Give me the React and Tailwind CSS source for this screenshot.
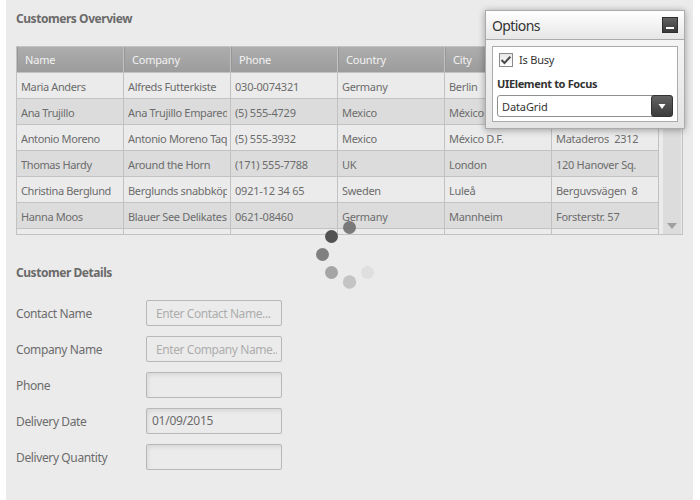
const columns = ["Name", "Company", "Phone", "Country", "City", "Address"];

const customers = [
  ["Maria Anders", "Alfreds Futterkiste", "030-0074321", "Germany", "Berlin", "Obere Str. 57"],
  ["Ana Trujillo", "Ana Trujillo Emparedados", "(5) 555-4729", "Mexico", "México D.F.", "Avda. 2222"],
  ["Antonio Moreno", "Antonio Moreno Taquería", "(5) 555-3932", "Mexico", "México D.F.", "Mataderos\u00a0 2312"],
  ["Thomas Hardy", "Around the Horn", "(171) 555-7788", "UK", "London", "120 Hanover Sq."],
  ["Christina Berglund", "Berglunds snabbköp", "0921-12 34 65", "Sweden", "Luleå", "Berguvsvägen\u00a0 8"],
  ["Hanna Moos", "Blauer See Delikatessen", "0621-08460", "Germany", "Mannheim", "Forsterstr. 57"],
];

const cellTracking = [
  "tracking-[-0.38px]",
  "tracking-[-0.33px]",
  "tracking-[-0.22px]",
  "tracking-[-0.3px]",
  "tracking-[-0.3px]",
  "tracking-[-0.28px]",
];

const fields = [
  { label: "Contact Name", placeholder: "Enter Contact Name..." },
  { label: "Company Name", placeholder: "Enter Company Name..." },
  { label: "Phone", value: "" },
  { label: "Delivery Date", value: "01/09/2015" },
  { label: "Delivery Quantity", value: "" },
];

function Heading({ children }) {
  return <h2 className="text-[12px] leading-4 font-bold tracking-[-0.45px] text-[#6a6a6a]">{children}</h2>;
}

function DataGrid() {
  return (
    <div className="mt-[19px] flex h-[189px] w-[667px] border border-[#c2c2c2]">
      <div className="flex w-[642px] shrink-0 flex-col">
        <div className="flex h-[26px] shrink-0">
          {columns.map((c) => (
            <div
              key={c}
              className="w-[107px] border-r border-b border-[#c2c2c2] bg-linear-to-b from-[#adadad] to-[#9c9c9c] pl-2 text-[11px] leading-[26px] tracking-[-0.2px] text-[#f2f2f2] shadow-[inset_1px_0_0_#969696]"
            >
              {c}
            </div>
          ))}
        </div>
        {customers.map((row) => (
          <div key={row[0]} className="flex h-[26px] shrink-0 bg-[#ebebeb] odd:bg-[#dcdcdc]">
            {row.map((cell, i) => (
              <div key={i} className="w-[107px] border-r border-b border-[#c2c2c2] pr-[3px] pl-1">
                <div
                  className={`h-[25px] overflow-hidden text-[11px] leading-[28px] whitespace-nowrap text-[#6c6c6c] ${cellTracking[i]}`}
                >
                  {cell}
                </div>
              </div>
            ))}
          </div>
        ))}
        <div className="flex h-[5px]">
          {columns.map((c) => (
            <div key={c} className="w-[107px] border-r border-[#c2c2c2]" />
          ))}
        </div>
      </div>
      <div className="ml-[4px] flex w-[18px] items-end justify-center bg-[#dcdcdc] pb-[5px]">
        <svg width="10" height="6" viewBox="0 0 10 6">
          <path d="M0 0h10L5 6z" fill="#a0a0a0" />
        </svg>
      </div>
    </div>
  );
}

function DetailsForm() {
  return (
    <div className="mt-[19px] flex flex-col gap-[10px]">
      {fields.map((f) => (
        <div key={f.label} className="flex h-[26px]">
          <div className="w-[130px] text-[12px] leading-[27px] tracking-[-0.38px] text-[#6c6c6c]">{f.label}</div>
          {f.placeholder ? (
            <div className="w-[136px] rounded-[2px] border border-[#b8b8b8] pr-1 pl-[9px]">
              <div className="h-6 overflow-hidden text-[12px] leading-[26px] tracking-[-0.42px] whitespace-nowrap text-[#adadad]">
                {f.placeholder}
              </div>
            </div>
          ) : (
            <div className="w-[136px] rounded-[2px] border border-[#b8b8b8] pl-[5px] text-[12px] leading-6 tracking-[-0.27px] text-[#6c6c6c] shadow-[inset_2px_3px_4px_-1px_rgba(0,0,0,0.09)]">
              {f.value}
            </div>
          )}
        </div>
      ))}
    </div>
  );
}

function OptionsPanel() {
  return (
    <div className="absolute top-[10px] left-[485px] flex h-[119px] w-[200px] flex-col border border-[#ababab] bg-linear-to-b from-[#fafafa] to-[#e4e4e4] shadow-[0_1px_7px_rgba(0,0,0,0.35)]">
      <div className="flex h-[29px] shrink-0 items-center justify-between border-b border-[#ababab] bg-linear-to-b from-white to-[#e6e6e6] pr-[6px] pl-[6px]">
        <span className="pt-[2px] text-[14px] leading-5 tracking-[-0.6px] text-[#333]">Options</span>
        <div className="flex h-4 w-4 items-end justify-center border border-[#2f2f2f] bg-linear-to-b from-[#636363] to-[#3a3a3a] pb-[3px]">
          <div className="h-[2px] w-2 bg-white" />
        </div>
      </div>
      <div className="mx-[6px] mt-[6px] h-[76px] border border-[#ababab] bg-white px-1">
        <div className="mt-[6px] flex h-[14px] items-center pl-[2px]">
          <div className="flex h-[14px] w-[14px] items-center justify-center border border-[#8a8a8a] bg-linear-to-b from-[#e8e8e8] to-white">
            <svg width="12" height="12" viewBox="0 0 12 12" fill="none" stroke="#4a4a4a" strokeWidth="2">
              <path d="M1.5 6L4.5 9L10.3 2.8" />
            </svg>
          </div>
          <span className="ml-[6px] text-[11px] leading-[14px] tracking-[-0.2px] text-[#333]">Is Busy</span>
        </div>
        <div className="mt-[9px] text-[11px] leading-[15px] font-bold tracking-[-0.35px] text-[#333]">UIElement to Focus</div>
        <div className="mt-[4px] flex h-[22px] w-[176px] rounded-[3px] border border-[#8f8f8f] bg-white">
          <div className="flex-1 pl-1 text-[11px] leading-[22px] tracking-[-0.1px] text-[#333]">DataGrid</div>
          <div className="-my-px -mr-px flex w-[22px] items-center justify-center rounded-[3px] border border-[#333] bg-linear-to-b from-[#636363] to-[#3c3c3c]">
            <svg width="8" height="5" viewBox="0 0 8 5">
              <path d="M0.5 0h7L4 5z" fill="#fff" />
            </svg>
          </div>
        </div>
      </div>
    </div>
  );
}

function BusySpinner() {
  return (
    <svg className="absolute top-[218px] left-[312px]" width="70" height="74" viewBox="312 218 70 74">
      <circle cx="349.5" cy="227.5" r="6.5" fill="#6f6f6f" fillOpacity="0.9" />
      <circle cx="331.5" cy="236.5" r="6.5" fill="#4c4c4c" fillOpacity="0.97" />
      <circle cx="322.5" cy="254.5" r="6.5" fill="#808080" />
      <circle cx="331.5" cy="272.5" r="6.5" fill="#a5a5a5" />
      <circle cx="349.5" cy="282" r="6.7" fill="#c4c4c4" />
      <circle cx="367.5" cy="272.5" r="6.5" fill="#dfdfdf" />
    </svg>
  );
}

export default function App() {
  return (
    <div className="relative h-[500px] w-[700px] overflow-hidden bg-white pl-[6px] font-['Noto_Sans','Open_Sans',sans-serif]">
      <main className="h-full w-[687px] bg-[#ebebeb] pt-[11px] pl-[10px]">
        <Heading>Customers Overview</Heading>
        <DataGrid />
        <div className="mt-[30px]">
          <Heading>Customer Details</Heading>
        </div>
        <DetailsForm />
      </main>
      <BusySpinner />
      <OptionsPanel />
    </div>
  );
}
